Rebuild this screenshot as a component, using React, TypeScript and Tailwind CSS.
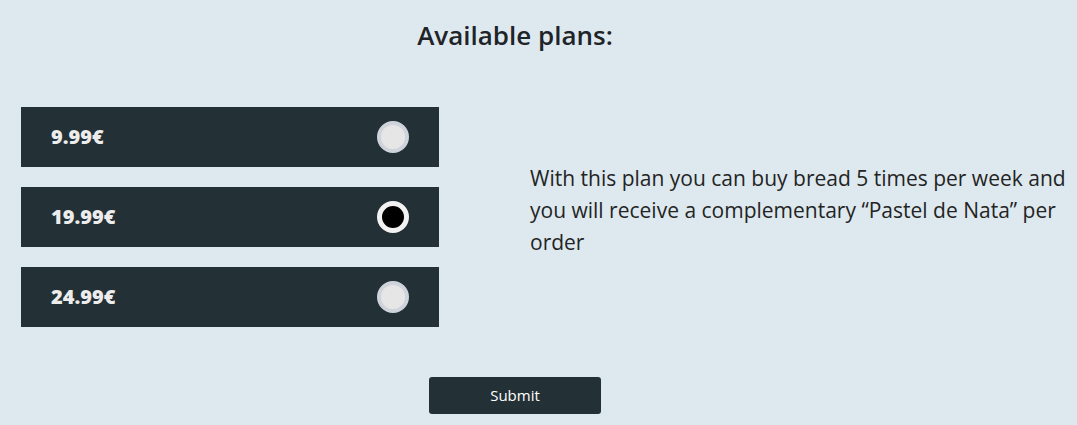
import { useState } from "react";

const plans = [
  { price: "9.99€" },
  { price: "19.99€" },
  { price: "24.99€" },
];

export default function App() {
  const [selected, setSelected] = useState(1);

  return (
    <div
      className="min-h-[425px] w-full bg-[#dde9ef] text-[#222]"
      style={{ fontFamily: '"Open Sans", "Noto Sans", sans-serif' }}
    >
      <div className="w-[1030px]">
        <h1 className="pt-[16px] text-center text-[26px] font-semibold leading-[38px] text-[#1f2428]">
          Available plans:
        </h1>

        <div className="mt-[53px] flex items-center">
          <div className="ml-[21px] flex w-[418px] shrink-0 flex-col gap-[20px]">
            {plans.map((plan, i) => (
              <label
                key={plan.price}
                className="flex h-[60px] cursor-pointer items-center justify-between bg-[#233036] pl-[30px] pr-[30px]"
                onClick={() => setSelected(i)}
              >
                <span className="text-[20px] font-extrabold text-[#ececec]">{plan.price}</span>
                <span
                  className={`block h-[32px] w-[32px] rounded-full ${
                    selected === i
                      ? "border-[5px] border-[#f2f2f2] bg-black"
                      : "border-[4px] border-[#cfd4dc] bg-[#e6e6e6]"
                  }`}
                />
              </label>
            ))}
          </div>

          <p className="mb-[14px] ml-[91px] w-[545px] shrink-0 text-[21px] leading-[32px] text-[#242424]">
            With this plan you can buy bread 5 times per week and you will receive a
            complementary “Pastel de Nata” per order
          </p>
        </div>

        <div className="mt-[50px] flex justify-center">
          <button className="h-[37px] w-[172px] rounded-[3px] bg-[#233036] text-[15px] text-white">
            Submit
          </button>
        </div>
      </div>
    </div>
  );
}
